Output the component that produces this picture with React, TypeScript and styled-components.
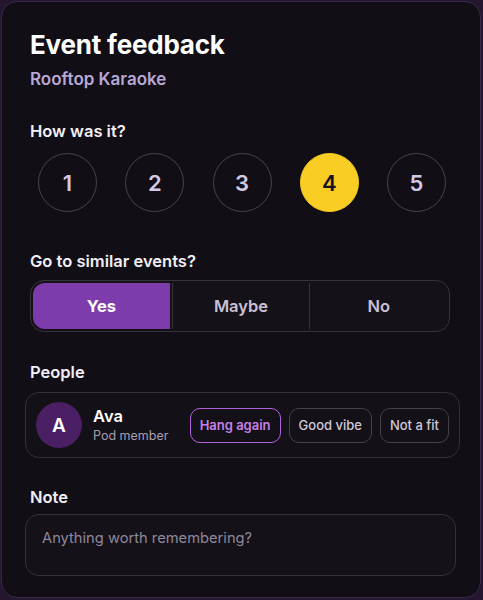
import { useState } from "react";
import styled, { createGlobalStyle } from "styled-components";

const GlobalStyle = createGlobalStyle`
  html, body {
    margin: 0;
    padding: 0;
    background: #24162e;
  }

  body {
    font-family: Inter, "Noto Sans", sans-serif;
    -webkit-font-smoothing: antialiased;
  }

  * {
    box-sizing: border-box;
  }
`;

const Card = styled.div`
  margin: 1px;
  width: 480px;
  height: 597px;
  border: 1px solid #3a2948;
  border-radius: 16px;
  background: #110e15;
  padding: 28px 30px 0 28px;
  display: flex;
  flex-direction: column;
  color: #f4f1f8;
`;

const Title = styled.h1`
  margin: 0;
  font-size: 26px;
  line-height: 30px;
  font-weight: 700;
  letter-spacing: -0.2px;
  color: #ffffff;
`;

const Subtitle = styled.p`
  margin: 9px 0 0;
  font-size: 17px;
  line-height: 20px;
  font-weight: 600;
  color: #b8a8d6;
`;

const Label = styled.h2<{ $top: number; $bottom: number }>`
  margin: ${(p) => p.$top}px 0 ${(p) => p.$bottom}px;
  font-size: 16.5px;
  line-height: 20px;
  font-weight: 600;
  color: #f2eff6;
`;

const RatingRow = styled.div`
  display: flex;
  justify-content: space-between;
  padding: 0 4px 0 8px;
`;

const RatingButton = styled.button<{ $active: boolean }>`
  width: 59px;
  height: 59px;
  border-radius: 50%;
  border: 1.5px solid ${(p) => (p.$active ? "#f9cd24" : "#48434f")};
  background: ${(p) => (p.$active ? "#f9cd24" : "transparent")};
  color: ${(p) => (p.$active ? "#17121c" : "#d2c9e6")};
  font-family: inherit;
  font-size: 22px;
  font-weight: 600;
  display: flex;
  align-items: center;
  justify-content: center;
  padding: 0;
  cursor: pointer;
`;

const Segmented = styled.div`
  display: flex;
  height: 52px;
  border: 1px solid #38323f;
  border-radius: 14px;
  background: #141118;
  padding: 2px;
  overflow: hidden;
`;

const Segment = styled.button<{ $active: boolean }>`
  flex: 1;
  border: none;
  border-left: 1px solid #38323f;
  background: ${(p) => (p.$active ? "#7d3bab" : "transparent")};
  color: ${(p) => (p.$active ? "#ffffff" : "#c9c0d6")};
  font-family: inherit;
  font-size: 16.5px;
  font-weight: ${(p) => (p.$active ? 700 : 600)};
  cursor: pointer;

  &:first-child {
    border-left: none;
    border-radius: 12px 0 0 12px;
    margin-right: 2px;
  }

  &:last-child {
    border-radius: 0 12px 12px 0;
  }
`;

const PersonRow = styled.div`
  display: flex;
  align-items: center;
  margin: 0 -10px 0 -5px;
  height: 66px;
  padding: 0 10px 0 10px;
  border: 1px solid #35303c;
  border-radius: 14px;
  background: #131017;
`;

const Avatar = styled.div`
  width: 46px;
  height: 46px;
  border-radius: 50%;
  background: #4a1f64;
  color: #ffffff;
  font-size: 19px;
  font-weight: 600;
  display: flex;
  align-items: center;
  justify-content: center;
  flex-shrink: 0;
`;

const PersonInfo = styled.div`
  display: flex;
  flex-direction: column;
  margin-left: 11px;
  flex: 1;
`;

const PersonName = styled.span`
  font-size: 16.5px;
  line-height: 20px;
  font-weight: 600;
  color: #ffffff;
`;

const PersonRole = styled.span`
  font-size: 12.5px;
  line-height: 18px;
  margin-top: 1px;
  color: #a69fb1;
`;

const Chips = styled.div`
  display: flex;
  gap: 8px;
`;

const Chip = styled.button<{ $active: boolean }>`
  height: 35px;
  padding: 0 9px;
  border-radius: 10px;
  border: 1.5px solid ${(p) => (p.$active ? "#b462dc" : "#46404d")};
  background: transparent;
  color: ${(p) => (p.$active ? "#c77fe8" : "#cfc8d9")};
  font-family: inherit;
  font-size: 13px;
  font-weight: ${(p) => (p.$active ? 600 : 500)};
  cursor: pointer;
`;

const NoteInput = styled.textarea`
  margin: 0 -6px 0 -5px;
  height: 62px;
  resize: none;
  border: 1px solid #35303c;
  border-radius: 14px;
  background: #141118;
  padding: 14px 16px;
  font-family: inherit;
  font-size: 14.7px;
  line-height: 18px;
  color: #f2eff6;
  outline: none;

  &::placeholder {
    color: #8f889b;
  }
`;

const ratings = [1, 2, 3, 4, 5];
const answers = ["Yes", "Maybe", "No"];
const tags = ["Hang again", "Good vibe", "Not a fit"];

export default function App() {
  const [rating, setRating] = useState(4);
  const [answer, setAnswer] = useState("Yes");
  const [tag, setTag] = useState("Hang again");

  return (
    <>
      <GlobalStyle />
      <Card>
        <Title>Event feedback</Title>
        <Subtitle>Rooftop Karaoke</Subtitle>

        <Label $top={32} $bottom={12}>How was it?</Label>
        <RatingRow>
          {ratings.map((r) => (
            <RatingButton key={r} $active={r === rating} onClick={() => setRating(r)}>
              {r}
            </RatingButton>
          ))}
        </RatingRow>

        <Label $top={39} $bottom={9}>Go to similar events?</Label>
        <Segmented>
          {answers.map((a) => (
            <Segment key={a} $active={a === answer} onClick={() => setAnswer(a)}>
              {a}
            </Segment>
          ))}
        </Segmented>

        <Label $top={30} $bottom={10}>People</Label>
        <PersonRow>
          <Avatar>A</Avatar>
          <PersonInfo>
            <PersonName>Ava</PersonName>
            <PersonRole>Pod member</PersonRole>
          </PersonInfo>
          <Chips>
            {tags.map((t) => (
              <Chip key={t} $active={t === tag} onClick={() => setTag(t)}>
                {t}
              </Chip>
            ))}
          </Chips>
        </PersonRow>

        <Label $top={29} $bottom={7}>Note</Label>
        <NoteInput placeholder="Anything worth remembering?" />
      </Card>
    </>
  );
}
